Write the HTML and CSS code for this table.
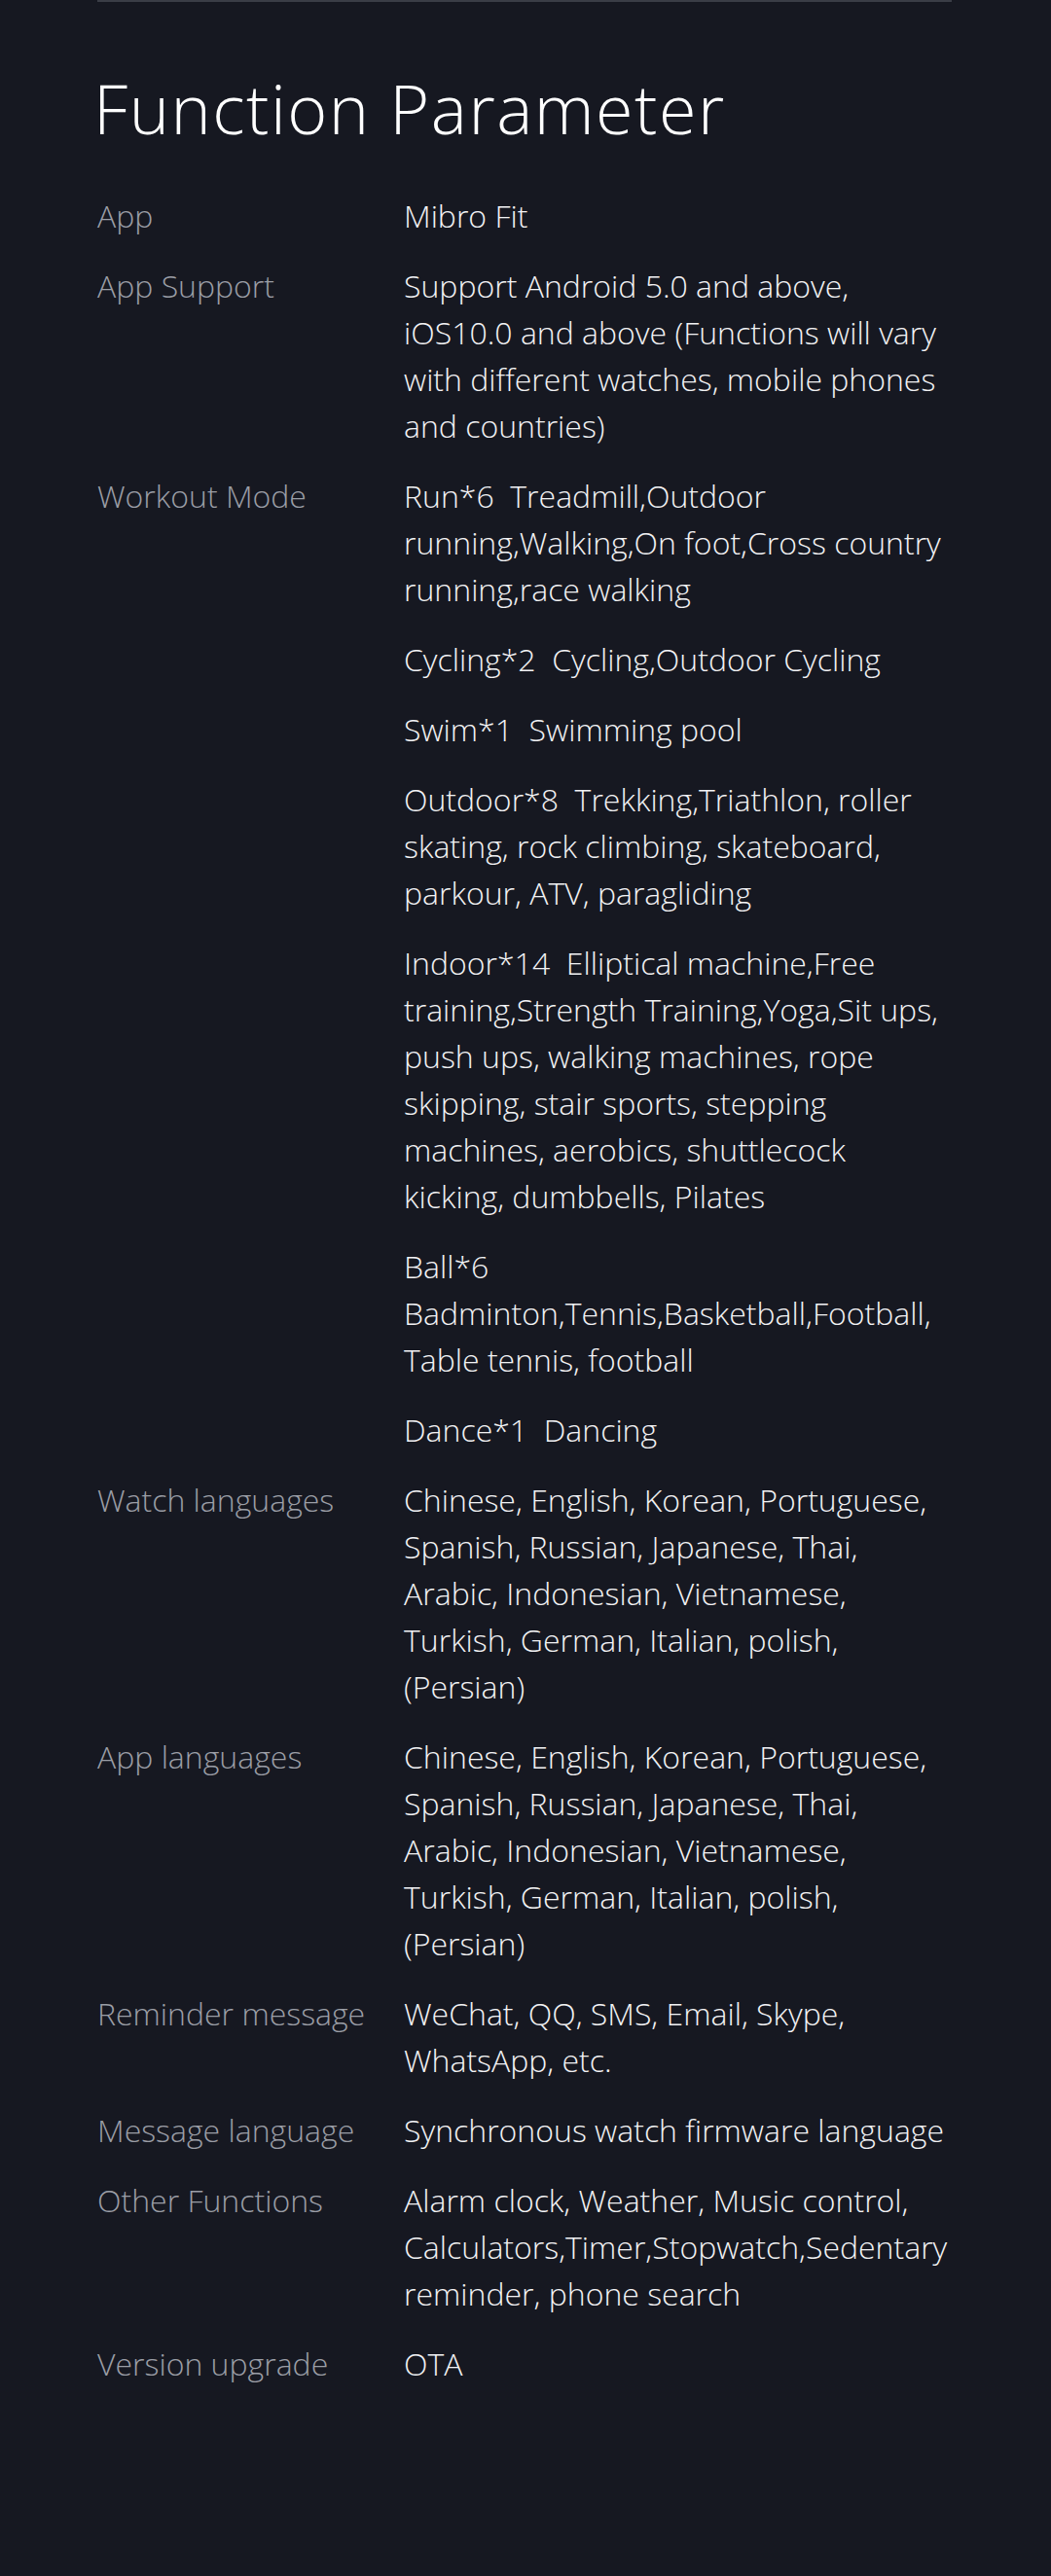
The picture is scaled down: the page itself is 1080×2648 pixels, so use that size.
FILE: index.html
```html
<!DOCTYPE html>
<html lang="en">
<head>
<meta charset="utf-8">
<title>Function Parameter</title>
<link rel="stylesheet" href="styles.css">
</head>
<body>
<div class="page">
  <div class="rule"></div>
  <h1 class="title">Function Parameter</h1>
  <div class="specs">
    <div class="label">App</div>
    <div class="value"><p>Mibro Fit</p></div>

    <div class="label">App Support</div>
    <div class="value"><p>Support Android 5.0 and above, iOS10.0 and above (Functions will vary with different watches, mobile phones and countries)</p></div>

    <div class="label">Workout Mode</div>
    <div class="value">
      <p>Run*6&nbsp; Treadmill,Outdoor running,Walking,On foot,Cross country running,race walking</p>
      <p>Cycling*2&nbsp; Cycling,Outdoor Cycling</p>
      <p>Swim*1&nbsp; Swimming pool</p>
      <p>Outdoor*8&nbsp; Trekking,Triathlon, roller skating, rock climbing, skateboard, parkour, ATV, paragliding</p>
      <p>Indoor*14&nbsp; Elliptical machine,Free training,Strength Training,Yoga,Sit ups, push ups, walking machines, rope skipping, stair sports, stepping machines, aerobics, shuttlecock kicking, dumbbells, Pilates</p>
      <p>Ball*6 Badminton,Tennis,Basketball,Football, Table tennis, football</p>
      <p>Dance*1&nbsp; Dancing</p>
    </div>

    <div class="label">Watch languages</div>
    <div class="value"><p>Chinese, English, Korean, Portuguese, Spanish, Russian, Japanese, Thai, Arabic, Indonesian, Vietnamese, Turkish, German, Italian, polish, (Persian)</p></div>

    <div class="label">App languages</div>
    <div class="value"><p>Chinese, English, Korean, Portuguese, Spanish, Russian, Japanese, Thai, Arabic, Indonesian, Vietnamese, Turkish, German, Italian, polish, (Persian)</p></div>

    <div class="label">Reminder message</div>
    <div class="value"><p>WeChat, QQ, SMS, Email, Skype, WhatsApp, etc.</p></div>

    <div class="label">Message language</div>
    <div class="value"><p>Synchronous watch firmware language</p></div>

    <div class="label">Other Functions</div>
    <div class="value"><p>Alarm clock, Weather, Music control, Calculators,Timer,Stopwatch,Sedentary reminder, phone search</p></div>

    <div class="label">Version upgrade</div>
    <div class="value"><p>OTA</p></div>
  </div>
</div>
</body>
</html>
```

FILE: styles.css
```css
html, body {
  margin: 0;
  padding: 0;
  background: #161821;
}
body {
  font-family: "Open Sans", "Noto Sans", sans-serif;
  font-weight: 300;
  color: #f2f2f4;
}
.page {
  width: 1080px;
  min-height: 2648px;
  box-sizing: border-box;
  padding: 0 102px 0 100px;
}
.rule {
  height: 2px;
  background: #3a3d46;
}
.title {
  margin: 64px 0 0 -4px;
  font-size: 70px;
  line-height: 90px;
  letter-spacing: 1.5px;
  font-weight: 300;
  color: #ffffff;
}
.specs {
  display: grid;
  grid-template-columns: 315px 1fr;
  row-gap: 24px;
  margin-top: 42px;
  font-size: 32px;
  line-height: 48px;
}
.label {
  color: #9b9ea6;
}
.value {
  display: flex;
  flex-direction: column;
  gap: 24px;
}
.value p {
  margin: 0;
}
```
